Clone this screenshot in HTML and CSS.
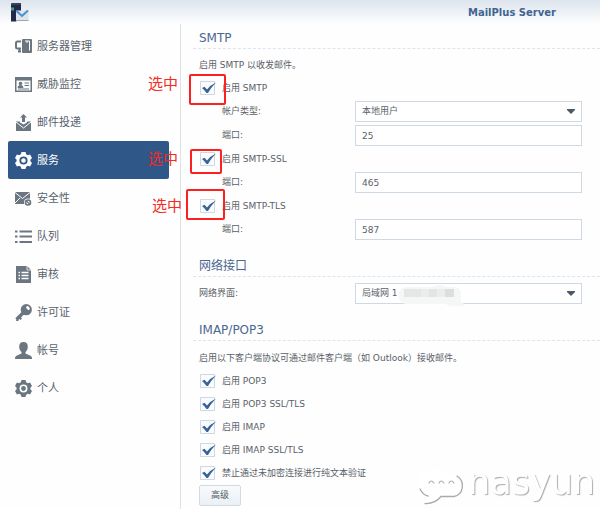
FILE: index.html
```html
<!DOCTYPE html>
<html lang="zh-CN">
<head>
<meta charset="utf-8">
<title>MailPlus Server</title>
<link rel="stylesheet" href="styles.css">
</head>
<body>
<header class="titlebar">
  <svg class="logo" viewBox="0 0 18 19" aria-hidden="true">
    <path d="M0 1l1-1h9v15l-5 3.500H0z" fill="#20294a"/>
    <path d="M0 1l1-1h9v2H0z" fill="#39415c"/>
    <path d="M0 6h3" stroke="#3fa08a" stroke-width="3"/>
    <path d="M5 7.500h12.500v10H5z" fill="#dfe4ea"/>
    <path d="M5 17.500h12.500" stroke="#a0a6b0"/>
    <path d="M5.500 8l5.500 5L17 7.500" fill="none" stroke="#4b8fd0" stroke-width="2"/>
  </svg>
  <h1 class="title">MailPlus Server</h1>
</header>
<div class="window">
  <nav class="sidebar">
    <a class="item" href="#"><svg class="icon" viewBox="0 0 17 17"><path d="M6 3.500H2.500Q1 3.500 1 5v4q0 1.500 1.500 1.500H6M4.500 10.500v3M3 13.500h3" fill="none" stroke="currentColor" stroke-width="2"/><rect x="7" y="1" width="10" height="14" rx="1" fill="currentColor"/><path d="M10 3h4.500v9.500M12 3v2" fill="none" stroke="#fff" stroke-width="1"/></svg>服务器管理</a>
    <a class="item" href="#"><svg class="icon" viewBox="0 0 17 17"><path d="M0 1h17v15H0zM1.500 4.500v10h14v-10z" fill="currentColor" fill-rule="evenodd"/><circle cx="5.500" cy="7.500" r="1.800" fill="currentColor"/><path d="M3 11.500q0-2 2.500-2t2.500 2zM9.500 7H14M9.500 9.500H14M3 13h11" fill="currentColor" stroke="currentColor"/></svg>威胁监控</a>
    <a class="item" href="#"><svg class="icon" viewBox="0 0 17 17"><path d="M1 7.500h4v1l3.500 2 3.500-2v-1h4V17H1z" fill="currentColor"/><path d="M1 8l7.500 6L16 8" fill="none" stroke="#fff" stroke-width="1"/><path d="M8.500 0l3.500 3.500h-2V8H7V3.500H5z" fill="currentColor"/></svg>邮件投递</a>
    <a class="item active" href="#" aria-current="page"><svg class="icon" viewBox="0 0 17 17"><path d="M6.500 0h4l.7 2.300 1.600.9 2.300-.6 1.900 3.400-1.600 1.700v1.600l1.600 1.700-1.900 3.400-2.300-.6-1.600.9-.7 2.300h-4l-.7-2.300-1.600-.9-2.300.6L0 11l1.600-1.700V7.700L0 6l1.900-3.400 2.300.6 1.600-.9z" fill="currentColor"/><circle cx="8.500" cy="8.500" r="3.200" fill="none" stroke="#2f5787" stroke-width="1.800"/></svg>服务</a>
    <a class="item" href="#"><svg class="icon" viewBox="0 0 17 17"><path d="M0 2h15v12H0z" fill="currentColor"/><path d="M0 2.500l7.500 6 7.500-6M0 13l5-5" fill="none" stroke="#fff" stroke-width="1"/><circle cx="13" cy="12.500" r="4" fill="#fff"/><circle cx="13" cy="12.500" r="2.500" fill="none" stroke="currentColor" stroke-width="1.600"/><path d="M11 10.500l4 4" stroke="currentColor" stroke-width="1.300"/></svg>安全性</a>
    <a class="item" href="#"><svg class="icon" viewBox="0 0 17 17"><path d="M0 3.500h2.500M4.500 3.500H17M0 8.500h2.500M4.500 8.500H17M0 14h2.500M4.500 14H17" stroke="currentColor" stroke-width="2"/></svg>队列</a>
    <a class="item" href="#"><svg class="icon" viewBox="0 0 17 17"><path d="M1 0h11l4 4v13H1z" fill="currentColor"/><path d="M12 0v4h4" fill="none" stroke="#fff" stroke-width=".8"/><path d="M3.500 6.500H5M6.500 6.500h7M3.500 9.500H5M6.500 9.500h7M3.500 12.500H5M6.500 12.500h7" stroke="#fff" stroke-width="1.400"/></svg>审核</a>
    <a class="item" href="#"><svg class="icon" viewBox="0 0 17 17"><circle cx="11.300" cy="5.700" r="5.600" fill="currentColor"/><path d="M8.500 8.500L1.500 15.500" stroke="currentColor" stroke-width="3.400"/><path d="M4 13l2.300 2.300M1.500 15.500L3 17" stroke="currentColor" stroke-width="2"/><ellipse cx="13" cy="4" rx="2.200" ry="1.400" transform="rotate(45 13 4)" fill="#fff"/></svg>许可证</a>
    <a class="item" href="#"><svg class="icon" viewBox="0 0 17 17"><path d="M8.500 0c3 0 4.300 2 4.300 4.700 0 2.300-.9 4.100-2.300 5.300v1.500l5 2.200q1.500.7 1.500 2.300v1H0v-1q0-1.600 1.500-2.300l5-2.200V10C5.100 8.800 4.200 7 4.200 4.700 4.200 2 5.500 0 8.500 0z" fill="currentColor"/></svg>帐号</a>
    <a class="item" href="#"><svg class="icon" viewBox="0 0 17 17"><path d="M6.500 0h4l.7 2.300 1.600.9 2.300-.6 1.900 3.400-1.600 1.700v1.600l1.600 1.700-1.900 3.400-2.300-.6-1.600.9-.7 2.300h-4l-.7-2.300-1.600-.9-2.300.6L0 11l1.600-1.700V7.700L0 6l1.900-3.400 2.300.6 1.600-.9z" fill="currentColor"/><circle cx="8.500" cy="8.500" r="3.200" fill="none" stroke="#fff" stroke-width="1.600"/></svg>个人</a>
  </nav>
  <main class="content">
    <section class="section">
      <h2 class="heading">SMTP</h2>
      <div class="body">
        <p class="row">启用 SMTP 以收发邮件。</p>
        <div class="groups">
          <div class="group">
            <div class="row marked"><input class="check" type="checkbox" id="smtp" checked><label for="smtp">启用 SMTP</label><span class="frame frame-smtp"></span><span class="note note-smtp">选中</span></div>
            <div class="row sub"><label class="name" for="type">帐户类型:</label><select class="field select" id="type"><option>本地用户</option></select></div>
          </div>
          <div class="group">
            <div class="row sub"><label class="name" for="port1">端口:</label><input class="field" id="port1" value="25"></div>
          </div>
          <div class="group">
            <div class="row marked"><input class="check" type="checkbox" id="ssl" checked><label for="ssl">启用 SMTP-SSL</label><span class="frame frame-ssl"></span><span class="note note-ssl">选中</span></div>
            <div class="row sub"><label class="name" for="port2">端口:</label><input class="field" id="port2" value="465"></div>
          </div>
          <div class="group">
            <div class="row marked"><input class="check" type="checkbox" id="tls" checked><label for="tls">启用 SMTP-TLS</label><span class="frame frame-tls"></span><span class="note note-tls">选中</span></div>
            <div class="row sub"><label class="name" for="port3">端口:</label><input class="field" id="port3" value="587"></div>
          </div>
        </div>
      </div>
    </section>
    <section class="section">
      <h2 class="heading">网络接口</h2>
      <div class="body">
        <div class="row"><label class="name" for="lan">网络界面:</label><div class="fieldwrap"><select class="field select" id="lan"><option>局域网 1</option></select>
          <svg class="redaction" viewBox="0 0 68 22" aria-hidden="true"><path d="M2 9Q3 3 10 3h25q8-4 14 0h9q6 1 6 8v7l3 2v2H54l-6-2H8Q1 18 2 9z" fill="#f5f6f6"/><path d="M7 5h17v8H7z" fill="#e6e6e6"/><path d="M24 5h24v8H24z" fill="#ececec"/><path d="M32 5h8v8h-8z" fill="#e4e4e5"/><path d="M48 5h9v8h-9z" fill="#dcdddd"/></svg></div></div>
      </div>
    </section>
    <section class="section">
      <h2 class="heading">IMAP/POP3</h2>
      <div class="body protocols">
        <p class="row">启用以下客户端协议可通过邮件客户端（如 Outlook）接收邮件。</p>
        <div class="row"><input class="check" type="checkbox" id="pop" checked><label for="pop">启用 POP3</label></div>
        <div class="row"><input class="check" type="checkbox" id="pops" checked><label for="pops">启用 POP3 SSL/TLS</label></div>
        <div class="row"><input class="check" type="checkbox" id="imap" checked><label for="imap">启用 IMAP</label></div>
        <div class="row"><input class="check" type="checkbox" id="imaps" checked><label for="imaps">启用 IMAP SSL/TLS</label></div>
        <div class="row"><input class="check" type="checkbox" id="plain" checked><label for="plain">禁止通过未加密连接进行纯文本验证</label></div>
        <button class="button" type="button">高级</button>
      </div>
    </section>
  </main>
</div>
<div class="watermark">
  <svg class="bubbles" viewBox="0 0 50 42" aria-hidden="true">
    <path d="M4 14C4 6 12 5 15 8C18 0 32 0 35 9C47 10 49 27 36 29H26Q20 37 8 36Q14 34 15 29C7 29 3 24 4 14z" fill="#fff"/>
    <path d="M5 22Q8 28 13 29M42 9C51 15 48 28 39 29.500H26Q20 37 10 36.500" fill="none" stroke="#aaa" stroke-width="1.300" stroke-linecap="round"/>
    <path d="M14 16q2-4 5 0M24 16q2-4 5 0M34 16q2-4 5 0" fill="none" stroke="#b0b0b0" stroke-width="1.200" stroke-linecap="round"/>
  </svg>
  <span class="brand">nasyun</span>
</div>
</body>
</html>
```
FILE: styles.css
```css
* { box-sizing: border-box; }

body {
  margin: 0;
  min-height: 100vh;
  display: flex;
  flex-direction: column;
  background: #fefefe;
  color: #596168;
  font: 9px/23px "DejaVu Sans", "Noto Sans CJK SC", sans-serif;
}

h1, h2, p { margin: 0; }

.titlebar {
  display: flex;
  align-items: center;
  justify-content: space-between;
  height: 24px;
  padding: 0 44px 0 11px;
  background: linear-gradient(#dce4ed, #fefefe);
}
.logo { width: 18px; height: 19px; }
.title { font-size: 10px; color: #416491; }

.window { flex: 1; display: flex; }

.sidebar {
  flex: none;
  width: 181px;
  padding: 3px 11px 0 8px;
  border-right: 1px solid #e0e1e3;
}
.item {
  display: flex;
  align-items: center;
  gap: 5px;
  height: 38px;
  padding-left: 7px;
  border-radius: 2px;
  color: #59636d;
  font-size: 11px;
  text-decoration: none;
}
.icon { width: 17px; height: 17px; color: #6b7681; }
.active { background: #2f5787; color: #fff; }
.active .icon { color: #fff; }

.content {
  flex: 1;
  min-width: 0;
  display: flex;
  flex-direction: column;
  gap: 15px;
  padding: 4px 0 0 12px;
}
.heading {
  padding-left: 6px;
  border-bottom: 1px dashed #dce5ef;
  color: #4b678f;
  font-size: 12px;
  font-weight: 400;
  line-height: 20px;
}
.body { padding: 5px 18px 0 6px; }
.protocols { padding-top: 6px; }
.groups { display: grid; gap: 1px; }
.row { display: flex; align-items: center; height: 23px; }
.sub { padding-left: 23px; }
.marked { position: relative; }

.name { width: 156px; }
.sub .name { width: 133px; }

.field {
  flex: 1;
  min-width: 0;
  width: 100%;
  height: 21px;
  padding: 0 6px;
  border: 1px solid #ced9e4;
  border-radius: 0;
  background: #fff;
  color: #596168;
  font: inherit;
  line-height: 19px;
}
.select {
  appearance: none;
  background: #fff url("data:image/svg+xml,%3Csvg xmlns='http://www.w3.org/2000/svg' width='8' height='5'%3E%3Cpath d='M0 0h8v1L4 5 0 1z' fill='%234c5966'/%3E%3C/svg%3E") no-repeat right 6px center;
}
.fieldwrap { position: relative; display: flex; flex: 1; }
.redaction { position: absolute; left: 42px; top: 1px; width: 68px; height: 22px; }

.check {
  appearance: none;
  width: 17px;
  height: 15px;
  margin: 0 5px 0 1px;
  background: url("data:image/svg+xml,%3Csvg xmlns='http://www.w3.org/2000/svg' width='17' height='15'%3E%3Cpath d='M.5 .5h14v13H.5z' fill='%23fafbfd' stroke='%23ced7e2'/%3E%3Cpath d='M2 7l2.500-1.200L7 8.500Q10.500 4 16 1.500Q11 6.500 8 12H6.500Q4.500 9 2 7z' fill='%23386399'/%3E%3C/svg%3E") no-repeat;
}

.button {
  display: block;
  height: 21px;
  padding: 0 11px;
  border: 1px solid #d0dae5;
  border-radius: 2px;
  background: linear-gradient(#f8fafc, #ebf0f6);
  color: #4f5960;
  font: inherit;
  line-height: 19px;
}

.frame {
  position: absolute;
  border: 2px solid #fc2020;
  border-radius: 2px;
  pointer-events: none;
}
.frame-smtp { left: -10px; top: -3px; width: 37px; height: 31px; }
.frame-ssl { left: -9px; top: 1px; width: 32px; height: 25px; }
.frame-tls { left: -13px; top: -6px; width: 39px; height: 31px; }
.note {
  position: absolute;
  color: #f32a25;
  font-size: 15px;
  white-space: nowrap;
}
.note-smtp { left: -51px; top: -4px; }
.note-ssl { left: -51px; top: 0; }
.note-tls { left: -47px; top: 0; }

.watermark {
  position: fixed;
  right: 5px;
  bottom: 0;
  display: flex;
  align-items: flex-end;
  gap: 3px;
  pointer-events: none;
}
.bubbles { width: 50px; height: 42px; }
.brand {
  padding-bottom: 6px;
  color: #fff;
  font-size: 35px;
  font-weight: 400;
  line-height: 42px;
  text-shadow: 1px 1px 1px #aaa;
}
```
